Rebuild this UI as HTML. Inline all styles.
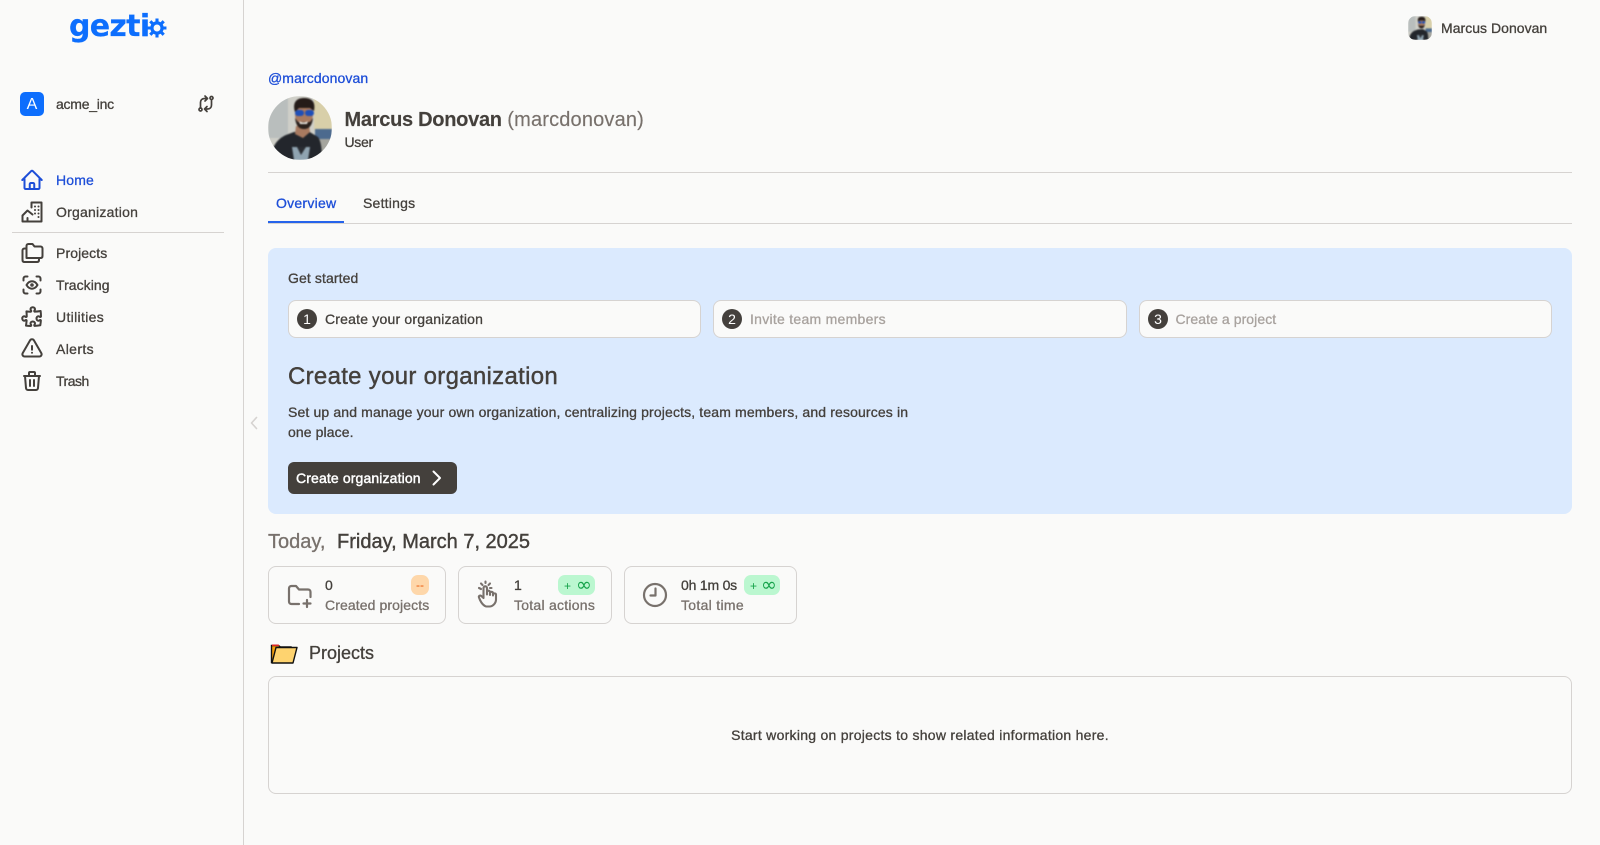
<!DOCTYPE html>
<html lang="en">
<head>
<meta charset="utf-8">
<title>Geztio</title>
<style>
*{box-sizing:border-box}
html,body{margin:0;padding:0;width:1600px;height:845px;overflow:hidden;background:#fafaf9;color:#44403c;font-family:"Liberation Sans",Arial,sans-serif;font-size:14px;-webkit-text-stroke:.3px}
.a{position:absolute;white-space:nowrap}
.t{line-height:20px;height:20px}
.ico{position:absolute;fill:none;stroke:#44403c;stroke-width:2;stroke-linecap:round;stroke-linejoin:round}
.line{position:absolute;background:#d6d3d1;height:1px}
.box{position:absolute;border:1px solid #d6d3d1;background:#fafaf9}
.num{position:absolute;width:20px;height:20px;border-radius:50%;background:#44403c;color:#fff;text-align:center;line-height:20px;font-size:14px;-webkit-text-stroke:0}
.badge{position:absolute;height:20px;border-radius:7px;background:#bbf7d0;color:#16a34a;font-size:12px;line-height:20px;-webkit-text-stroke:0}
.inf{position:absolute;top:0;font-family:"DejaVu Sans",sans-serif;font-size:19px;line-height:20px}
.pl{position:absolute;top:1px;left:6px}
</style>
</head>
<body>
<div class="a" style="left:243px;top:0;width:1px;height:845px;background:#d6d3d1"></div>

<div class="a" style="left:69px;top:8px;font-family:'DejaVu Sans',sans-serif;font-size:30px;line-height:38px;font-weight:700;color:#0d6efd;letter-spacing:-.7px;-webkit-text-stroke:.2px #0d6efd">gezti</div>
<svg class="a" style="left:146.500px;top:18px" width="20" height="20" viewBox="0 0 22 22"><circle cx="11" cy="11" r="5.600" fill="none" stroke="#0d6efd" stroke-width="3.600"/><g stroke="#0d6efd" stroke-width="3.400"><path d="M11 .6v4M11 17.400v4M.6 11h4M17.400 11h4M3.600 3.600l2.800 2.800M15.600 15.600l2.800 2.800M3.600 18.400l2.800-2.800M15.600 6.400l2.800-2.800"/></g></svg>

<div class="a" style="left:20px;top:92px;width:24px;height:24px;border-radius:5px;background:#0d6efd;color:#fff;text-align:center;line-height:25px;font-size:16px;-webkit-text-stroke:0">A</div>
<div class="a t" style="left:56px;top:94px;letter-spacing:-.25px">acme_inc</div>
<svg class="ico" style="left:196px;top:94px;stroke-width:1.700" width="20" height="20" viewBox="0 0 20 20"><circle cx="4.500" cy="15.500" r="1.500"/><circle cx="15.500" cy="4" r="1.500"/><path d="M4.500 14V8.500C4.500 6 6 4.500 8.500 4.500H11M9 2l2.500 2.500L9 7M15.500 5.500V11c0 2.500-1.500 4-4 4H9M11 12.500L8.500 15l2.500 2.500"/></svg>

<svg class="ico" style="left:20px;top:168px;stroke:#1d4ed8" width="24" height="24" viewBox="0 0 24 24"><path d="m2.250 12 8.954-8.955c.44-.439 1.152-.439 1.591 0L21.750 12M4.500 9.750v10.125c0 .621.504 1.125 1.125 1.125H9.750v-4.875c0-.621.504-1.125 1.125-1.125h2.250c.621 0 1.125.504 1.125 1.125V21h4.125c.621 0 1.125-.504 1.125-1.125V9.750M8.250 21h8.250"/></svg>
<div class="a t" style="left:56px;top:170px;color:#1d4ed8;letter-spacing:.15px">Home</div>

<svg class="ico" style="left:20px;top:200px" width="24" height="24" viewBox="0 0 24 24"><path d="M11.500 7.500V2.500h10v19h-19v-6l5-5 5 4M7.500 21.500v-3.500"/><path d="M15 6.500h.01M18.500 6.500h.01M15 10h.01M18.500 10h.01M15 13.500h.01M18.500 13.500h.01M18.500 17h.01"/></svg>
<div class="a t" style="left:56px;top:202px;letter-spacing:.23px">Organization</div>

<div class="line" style="left:12px;top:232px;width:212px"></div>

<svg class="ico" style="left:20px;top:241px" width="24" height="24" viewBox="0 0 24 24"><path d="M6.500 17V5c0-1.300.8-2 2-2h4l2 2.500h6c1.200 0 2 .8 2 2V15c0 1.300-.8 2-2 2z"/><path d="M6.500 7.500h-2c-1.300 0-2 .8-2 2V19c0 1.300.8 2 2 2h12.500c1.300 0 2-.7 2-2v-2"/></svg>
<div class="a t" style="left:56px;top:243px;letter-spacing:.1px">Projects</div>

<svg class="ico" style="left:20px;top:273px" width="24" height="24" viewBox="0 0 24 24"><path d="M3.500 7.500V5.500c0-1.100.9-2 2-2h2M16.500 3.500h2c1.100 0 2 .9 2 2v2M20.500 16.500v2c0 1.100-.9 2-2 2h-2M7.500 20.500h-2c-1.100 0-2-.9-2-2v-2"/><path d="M6.500 12c1.500-2.500 3.300-3.700 5.500-3.700s4 1.200 5.500 3.700c-1.500 2.500-3.300 3.700-5.500 3.700S8 14.500 6.500 12z"/><circle cx="12" cy="12" r=".8"/></svg>
<div class="a t" style="left:56px;top:275px;letter-spacing:.05px">Tracking</div>

<svg class="ico" style="left:20px;top:305px" width="24" height="24" viewBox="0 0 24 24"><path d="M14.250 6.087c0-.355.186-.676.401-.959.221-.29.349-.634.349-1.003 0-1.036-1.007-1.875-2.250-1.875s-2.250.84-2.250 1.875c0 .369.128.713.349 1.003.215.283.401.604.401.959a.64.64 0 0 1-.657.643 48.390 48.390 0 0 1-4.163-.3c.186 1.613.293 3.250.315 4.907a.656.656 0 0 1-.658.663c-.355 0-.676-.186-.959-.401a1.647 1.647 0 0 0-1.003-.349c-1.036 0-1.875 1.007-1.875 2.250s.84 2.250 1.875 2.250c.369 0 .713-.128 1.003-.349.283-.215.604-.401.959-.401.31 0 .555.26.532.57a48.039 48.039 0 0 1-.642 5.056c1.518.19 3.058.309 4.616.354a.64.64 0 0 0 .657-.643c0-.355-.186-.676-.401-.959a1.647 1.647 0 0 1-.349-1.003c0-1.035 1.008-1.875 2.250-1.875 1.243 0 2.250.84 2.250 1.875 0 .369-.128.713-.349 1.003-.215.283-.4.604-.4.959 0 .333.277.599.61.58a48.100 48.100 0 0 0 5.427-.63 48.050 48.050 0 0 0 .582-4.717.532.532 0 0 0-.533-.57c-.355 0-.676.186-.959.401-.29.221-.634.349-1.003.349-1.035 0-1.875-1.007-1.875-2.250s.84-2.250 1.875-2.250c.37 0 .713.128 1.003.349.283.215.604.401.96.401a.656.656 0 0 0 .658-.663 48.422 48.422 0 0 0-.37-5.360c-1.886.342-3.810.574-5.766.689a.578.578 0 0 1-.61-.58z"/></svg>
<div class="a t" style="left:56px;top:307px;letter-spacing:.33px">Utilities</div>

<svg class="ico" style="left:20px;top:337px" width="24" height="24" viewBox="0 0 24 24"><path d="M12 9v3.750m-9.303 3.376c-.866 1.500.217 3.374 1.948 3.374h14.710c1.730 0 2.813-1.874 1.948-3.374L13.949 3.378c-.866-1.500-3.032-1.500-3.898 0L2.697 16.126ZM12 15.750h.007v.008H12v-.008Z"/></svg>
<div class="a t" style="left:56px;top:339px;letter-spacing:.36px">Alerts</div>

<svg class="ico" style="left:20px;top:369px" width="24" height="24" viewBox="0 0 24 24"><path d="M4 7h16M10 11v6M14 11v6M5 7l1 12a2 2 0 0 0 2 2h8a2 2 0 0 0 2-2l1-12M9 7V4a1 1 0 0 1 1-1h4a1 1 0 0 1 1 1v3"/></svg>
<div class="a t" style="left:56px;top:371px;letter-spacing:-.5px">Trash</div>

<svg class="ico" style="left:248px;top:415px;stroke:#d6d3d1;stroke-width:1.600" width="12" height="16" viewBox="0 0 12 16"><path d="M8.500 2.500L3.500 8l5 5.500"/></svg>

<svg class="a" style="left:1408px;top:16px" width="24" height="24" viewBox="0 0 64 64"><defs><clipPath id="c1"><rect width="64" height="64" rx="20"/></clipPath></defs><g clip-path="url(#c1)"><g style="filter:blur(2px)"><rect width="64" height="64" fill="#cfcfc8"/><rect x="0" width="20" height="42" fill="#b9bebd"/><rect x="46" width="18" height="34" fill="#d8cfa9"/><rect x="47" y="33" width="17" height="10" fill="#4c6a8e"/><rect x="44" y="43" width="20" height="21" fill="#a5a59e"/><path d="M3 64c0-13 6-21 15-25l8-3 14-1 10 6c3 4 4 12 4 23z" fill="#23262c"/><path d="M24 51h18l-2 13H26z" fill="#8fa3b0"/><path d="M29 51l4 8 5-8z" fill="#2a2d33"/><ellipse cx="36" cy="18" rx="9" ry="14" fill="#a87a60"/><path d="M27 16C24 6 29 2 36 2s12 3 10 13l-4-3H31z" fill="#241b18"/><path d="M27 22c1 8 4 11 9 11s8-3 9-11l-3 4H30z" fill="#2a201c"/><rect x="27" y="14" width="9" height="6" rx="3" fill="#1f4fb8"/><rect x="37" y="14" width="9" height="6" rx="3" fill="#1f4fb8"/></g></g></svg>
<div class="a t" style="left:1441px;top:18px;letter-spacing:.03px">Marcus Donovan</div>

<div class="a t" style="left:268px;top:68px;color:#1d4ed8;letter-spacing:.1px">@marcdonovan</div>

<svg class="a" style="left:268px;top:96px" width="64" height="64" viewBox="0 0 64 64"><defs><clipPath id="c2"><circle cx="32" cy="32" r="32"/></clipPath></defs><g clip-path="url(#c2)"><g style="filter:blur(.8px)"><rect width="64" height="64" fill="#cfcfc8"/><rect x="0" width="20" height="42" fill="#b9bebd"/><rect x="46" width="18" height="34" fill="#d8cfa9"/><rect x="47" y="33" width="17" height="10" fill="#4c6a8e"/><rect x="44" y="43" width="20" height="21" fill="#a5a59e"/><path d="M3 64c0-13 6-21 15-25l8-3 14-1 10 6c3 4 4 12 4 23z" fill="#23262c"/><path d="M24 51h18l-2 13H26z" fill="#8fa3b0"/><path d="M29 51l4 8 5-8z" fill="#2a2d33"/><ellipse cx="36" cy="18" rx="9" ry="14" fill="#a87a60"/><path d="M28 30l-1 8 8 4 7-6-1-7z" fill="#a87a60"/><path d="M27 16C24 6 29 2 36 2s12 3 10 13l-4-3H31z" fill="#241b18"/><path d="M27 22c1 8 4 11 9 11s8-3 9-11l-3 4H30z" fill="#2a201c"/><path d="M31 25c2 2 7 2 9 0l-1 3h-7z" fill="#f3efe9"/><rect x="27" y="14" width="9" height="6" rx="3" fill="#1f4fb8"/><rect x="37" y="14" width="9" height="6" rx="3" fill="#1f4fb8"/></g></g></svg>

<div class="a" style="left:344.500px;top:107.500px;font-size:20px;line-height:24px;height:24px;-webkit-text-stroke:.15px"><span style="font-weight:700;letter-spacing:-.28px">Marcus Donovan</span> <span style="color:#78716c;letter-spacing:.17px">(marcdonovan)</span></div>
<div class="a t" style="left:344.500px;top:132px;letter-spacing:-.3px">User</div>

<div class="line" style="left:268px;top:172px;width:1304px"></div>

<div class="a t" style="left:276px;top:193px;color:#1d4ed8;letter-spacing:.25px">Overview</div>
<div class="a t" style="left:363px;top:193px;letter-spacing:.22px">Settings</div>
<div class="line" style="left:268px;top:223px;width:1304px"></div>
<div class="a" style="left:268px;top:221px;width:76px;height:2px;background:#2563eb"></div>

<div class="a" style="left:268px;top:248px;width:1304px;height:266px;background:#dbeafe;border-radius:8px"></div>
<div class="a t" style="left:288px;top:268px;letter-spacing:.1px">Get started</div>

<div class="box" style="left:288px;top:300px;width:413px;height:38px;border-radius:8px"></div>
<div class="num" style="left:297px;top:309px">1</div>
<div class="a t" style="left:325px;top:309px;letter-spacing:.2px">Create your organization</div>

<div class="box" style="left:713px;top:300px;width:414px;height:38px;border-radius:8px"></div>
<div class="num" style="left:722px;top:309px">2</div>
<div class="a t" style="left:750px;top:309px;color:#a8a29e;letter-spacing:.27px">Invite team members</div>

<div class="box" style="left:1139px;top:300px;width:413px;height:38px;border-radius:8px"></div>
<div class="num" style="left:1148px;top:309px">3</div>
<div class="a t" style="left:1175.500px;top:309px;color:#a8a29e;letter-spacing:.07px">Create a project</div>

<div class="a" style="left:288px;top:361px;font-size:24px;line-height:32px;letter-spacing:.3px;-webkit-text-stroke:.4px">Create your organization</div>
<div class="a t" style="left:288px;top:402px;letter-spacing:.14px">Set up and manage your own organization, centralizing projects, team members, and resources in</div>
<div class="a t" style="left:288px;top:422px;letter-spacing:.1px">one place.</div>

<div class="a" style="left:288px;top:462px;width:169px;height:32px;background:#44403c;border-radius:6px"></div>
<div class="a t" style="left:296px;top:468px;color:#fff;-webkit-text-stroke:.45px #fff;letter-spacing:.13px">Create organization</div>
<svg class="ico" style="left:430px;top:470px;stroke:#fff" width="14" height="16" viewBox="0 0 14 16"><path d="M3.500 1.500L10 8l-6.500 6.500"/></svg>

<div class="a" style="left:268px;top:530px;font-size:20px;line-height:24px;color:#78716c">Today,</div>
<div class="a" style="left:337px;top:530px;font-size:20px;line-height:24px;-webkit-text-stroke:.4px">Friday, March 7, 2025</div>

<div class="box" style="left:268px;top:566px;width:178px;height:57.500px;border-radius:8px"></div>
<svg class="ico" style="left:286px;top:582px;stroke:#78716c;stroke-width:2.200" width="28" height="28" viewBox="0 0 28 28"><path d="M13 22H5.500C4 22 3 21 3 19.500V6.500C3 5 4 4 5.500 4H10l3 3.500h9c1.500 0 2.500 1 2.500 2.500v5"/><path d="M21 18v7M17.500 21.500h7"/></svg>
<div class="a t" style="left:325px;top:575px">0</div>
<div class="a t" style="left:325px;top:595px;color:#78716c;letter-spacing:.1px">Created projects</div>
<div class="badge" style="left:411px;top:575px;width:18px;background:#fed7aa;color:#ea580c;text-align:center">--</div>

<div class="box" style="left:458px;top:566px;width:154px;height:57.500px;border-radius:8px"></div>
<svg class="ico" style="left:476px;top:580px;stroke:#78716c;stroke-width:2.100" width="28" height="28" viewBox="0 0 28 28"><path d="M9 26c-2-1-3.500-3-5-6L3 17.500c-.6-1.500 1-2.500 2.300-1.500L7.500 18V8c0-2.200 3.500-2.200 3.500 0v6.500V12c0-1.700 3-1.700 3 0v3-2c0-1.600 3-1.600 3 0v2.500-1c0-1.500 3-1.500 3 0v5c0 3.500-3 7-6.500 7h-3c-.6 0-1-.2-1.500-.5z"/><path d="M3 8l2 1M5 3.500l1.500 1.500M9.500 1.500v1.500M14 3.500l-1.500 1.500M15.500 8h-1.500"/></svg>
<div class="a t" style="left:514px;top:575px">1</div>
<div class="a t" style="left:514px;top:595px;color:#78716c;letter-spacing:.25px">Total actions</div>
<div class="badge" style="left:558px;top:575px;width:37px"><span class="pl">+</span><span class="inf" style="left:18px">∞</span></div>

<div class="box" style="left:624px;top:566px;width:173px;height:57.500px;border-radius:8px"></div>
<svg class="ico" style="left:641px;top:581px;stroke:#78716c;stroke-width:2.200" width="28" height="28" viewBox="0 0 28 28"><circle cx="14" cy="14" r="11"/><path d="M14.500 7.500V14.500H9.500"/></svg>
<div class="a t" style="left:681px;top:575px;letter-spacing:-.2px">0h 1m 0s</div>
<div class="a t" style="left:681px;top:595px;color:#78716c;letter-spacing:.3px">Total time</div>
<div class="badge" style="left:744px;top:575px;width:36px"><span class="pl">+</span><span class="inf" style="left:17px">∞</span></div>

<svg class="a" style="left:270px;top:642px" width="28" height="22" viewBox="0 0 28 22"><path d="M1.500 20.500V3.500h7l2 1.500h10.500v2H6L2.500 20.500z" fill="#f59e0b" stroke="#111" stroke-width="1.400"/><path d="M2 2.500h6.500l1 1.500H2z" fill="#dc2626"/><path d="M6 5.500h21l-4 15.500H2z" fill="#fed36f" stroke="#111" stroke-width="1.400" stroke-linejoin="round"/></svg>
<div class="a" style="left:309px;top:641px;font-size:18px;line-height:24px">Projects</div>

<div class="box" style="left:268px;top:676px;width:1304px;height:118px;border-radius:8px"></div>
<div class="a t" style="left:268px;top:725px;width:1304px;text-align:center;letter-spacing:.27px">Start working on projects to show related information here.</div>
</body>
</html>
